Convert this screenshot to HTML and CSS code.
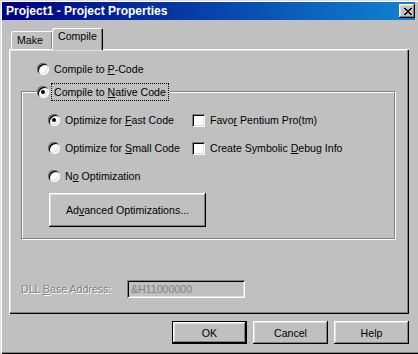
FILE: index.html
```html
<!DOCTYPE html>
<html>
<head>
<meta charset="utf-8">
<link rel="stylesheet" href="styles.css">
</head>
<body>
<div class="window">
  <div class="titlebar">
    <span class="title">Project1 - Project Properties</span>
    <span class="close"><svg width="8" height="7" viewBox="0 0 8 7" shape-rendering="crispEdges"><path d="M0 0h2v1H0z M6 0h2v1H6z M1 1h2v1H1z M5 1h2v1H5z M2 2h4v1H2z M3 3h2v1H3z M2 4h4v1H2z M1 5h2v1H1z M5 5h2v1H5z M0 6h2v1H0z M6 6h2v1H6z" fill="#000"/></svg></span>
  </div>
  <div class="content">
    <div class="tabs">
      <div class="tab">Make</div>
      <div class="tab active">Compile</div>
    </div>
    <div class="panel">
      <div class="row pcode"><span class="radio"></span><span class="lbl">Compile to <u>P</u>-Code</span></div>
      <div class="group">
        <div class="legend"><span class="radio on"></span><span class="lbl focus">Compile to <u>N</u>ative Code</span></div>
        <div class="opts">
          <div class="row"><span class="radio on"></span><span class="lbl">Optimize for <u>F</u>ast Code</span></div>
          <div class="row"><span class="check"></span><span class="lbl">Favo<u>r</u> Pentium Pro(tm)</span></div>
          <div class="row"><span class="radio"></span><span class="lbl">Optimize for <u>S</u>mall Code</span></div>
          <div class="row"><span class="check"></span><span class="lbl">Create Symbolic <u>D</u>ebug Info</span></div>
          <div class="row"><span class="radio"></span><span class="lbl">N<u>o</u> Optimization</span></div>
        </div>
        <div class="btn advanced">Ad<u>v</u>anced Optimizations...</div>
      </div>
      <div class="dll">
        <span class="disabled dll-label">DLL <u>B</u>ase Address:</span>
        <span class="textbox">&amp;H11000000</span>
      </div>
    </div>
    <div class="buttons">
      <div class="btn default">OK</div>
      <div class="btn">Cancel</div>
      <div class="btn">Help</div>
    </div>
  </div>
</div>
</body>
</html>
```

FILE: styles.css
```css
* { box-sizing: border-box; }
html, body { margin: 0; padding: 0; background: #c0c0c0; }
body {
  font-family: "Liberation Sans", Arial, sans-serif;
  font-size: 10.6px;
  color: #000;
}
.window {
  width: 418px;
  height: 354px;
  background: #c0c0c0;
  padding: 2px 3px 2px 2px;
  box-shadow: inset 1px 1px 0 #dfdfdf, inset 2px 2px 0 #fff, inset 0 -1px 0 #000, inset 0 -2px 0 #808080;
}
.titlebar {
  height: 18px;
  background: linear-gradient(90deg, #000080, #1084d0);
  display: flex;
  align-items: center;
  justify-content: space-between;
  padding: 0 0 0 4px;
}
.title {
  color: #fff;
  font-weight: bold;
  font-size: 12px;
}
.close {
  width: 16px;
  height: 14px;
  background: #c0c0c0;
  display: flex;
  align-items: center;
  justify-content: center;
  padding-left: 1px;
  box-shadow: inset -1px -1px 0 #000, inset 1px 1px 0 #fff, inset -2px -2px 0 #808080, inset 2px 2px 0 #dfdfdf;
}
.close svg { display: block; }
.content {
  padding: 8px 0 0 7px;
}
.tabs {
  display: flex;
  align-items: flex-end;
  height: 21px;
  padding-left: 2px;
  position: relative;
  z-index: 1;
}
.tab {
  height: 18px;
  padding: 3px 0 0 6px;
  width: 42px;
  background: #c0c0c0;
  border-top-left-radius: 2px;
  border-top-right-radius: 2px;
  box-shadow: inset 1px 1px 0 #fff, inset -1px 0 0 #000, inset -2px 0 0 #808080;
}
.tab.active {
  height: 22px;
  width: 51px;
  margin-left: -1px;
  margin-bottom: -1px;
  padding: 2px 0 0 6px;
}
.panel {
  width: 400px;
  height: 265px;
  padding: 12px 0 0 12px;
  box-shadow: inset 1px 1px 0 #fff, inset -1px -1px 0 #000, inset -2px -2px 0 #808080, inset 2px 2px 0 #dfdfdf;
}
.row {
  display: flex;
  align-items: center;
  height: 16px;
}
.lbl {
  padding: 0 1px;
  line-height: 14px;
}
.focus { outline: 1px dotted #000; outline-offset: 1px; }
.pcode { margin-left: 16px; }
.radio {
  width: 12px;
  height: 12px;
  border-radius: 50%;
  background: #fff;
  margin-right: 4px;
  flex: none;
  position: relative;
  box-shadow: inset 1px 1px 0 #808080, inset -1px -1px 0 #fff, inset 2px 2px 0 #000, inset -2px -2px 0 #dfdfdf;
}
.radio.on::after {
  content: "";
  position: absolute;
  left: 4px;
  top: 4px;
  width: 4px;
  height: 4px;
  border-radius: 50%;
  background: #000;
}
.check {
  width: 13px;
  height: 13px;
  background: #fff;
  margin-right: 4px;
  flex: none;
  box-shadow: inset 1px 1px 0 #808080, inset -1px -1px 0 #fff, inset 2px 2px 0 #000, inset -2px -2px 0 #dfdfdf;
}
.group {
  margin-top: 14px;
  width: 374px;
  height: 148px;
  border: 1px solid #808080;
  box-shadow: inset 1px 1px 0 #fff, 1px 1px 0 #fff;
}
.legend {
  display: flex;
  width: fit-content;
  align-items: center;
  height: 16px;
  margin-top: -8px;
  margin-left: 15px;
  padding-right: 3px;
  background: #c0c0c0;
}
.opts {
  display: grid;
  grid-template-columns: 144px auto;
  grid-auto-rows: 16px;
  row-gap: 12px;
  margin: 12px 0 0 26px;
}
.btn {
  width: 75px;
  height: 23px;
  display: flex;
  align-items: center;
  justify-content: center;
  background: #c0c0c0;
  box-shadow: inset -1px -1px 0 #000, inset 1px 1px 0 #fff, inset -2px -2px 0 #808080, inset 2px 2px 0 #dfdfdf;
}
.btn.default {
  box-shadow: inset 0 0 0 1px #000, inset -2px -2px 0 #000, inset 2px 2px 0 #fff, inset -3px -3px 0 #808080, inset 3px 3px 0 #dfdfdf;
}
.advanced {
  width: 157px;
  height: 34px;
  margin: 9px 0 0 27px;
}
.dll {
  display: flex;
  align-items: center;
  margin-top: 41px;
  height: 18px;
}
.disabled {
  color: #808080;
  text-shadow: 1px 1px 0 #fff;
}
.dll-label { width: 106px; }
.textbox {
  width: 118px;
  height: 18px;
  padding: 0 4px;
  display: flex;
  align-items: center;
  color: #808080;
  box-shadow: inset 1px 1px 0 #808080, inset -1px -1px 0 #fff, inset 2px 2px 0 #000, inset -2px -2px 0 #dfdfdf;
}
.buttons {
  display: flex;
  justify-content: flex-end;
  gap: 6px;
  margin-top: 7px;
  width: 400px;
}
```
